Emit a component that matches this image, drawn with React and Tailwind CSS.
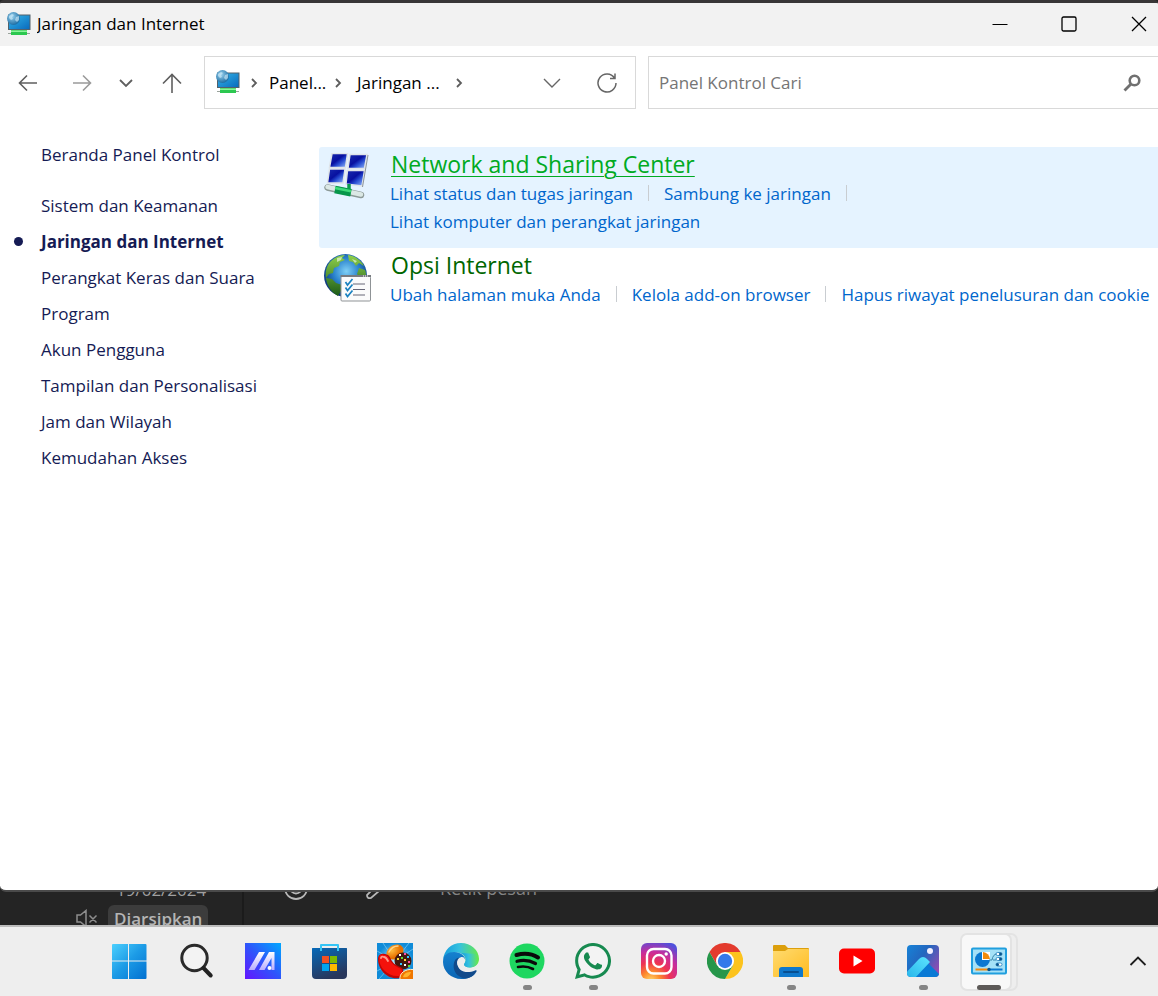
import React from "react";
import { FaWhatsapp } from "react-icons/fa";

const sideLinks = [
  "Sistem dan Keamanan",
  "Jaringan dan Internet",
  "Perangkat Keras dan Suara",
  "Program",
  "Akun Pengguna",
  "Tampilan dan Personalisasi",
  "Jam dan Wilayah",
  "Kemudahan Akses",
];

function NetworkIcon({ id }) {
  return (
    <svg viewBox="0 0 24 24" className="size-6 shrink-0" aria-hidden="true">
      <defs>
        <linearGradient id={id + "s"} x1="0" y1="0" x2="1" y2="1">
          <stop offset="0" stopColor="#35b6e8" />
          <stop offset="1" stopColor="#0869bd" />
        </linearGradient>
        <radialGradient id={id + "g"} cx=".4" cy=".35" r=".65">
          <stop offset="0" stopColor="#9ad2ee" />
          <stop offset="1" stopColor="#1f6fa5" />
        </radialGradient>
      </defs>
      <rect x="1.5" y="3" width="21.5" height="14.5" fill={"url(#" + id + "s)"} stroke="#52616b" />
      <path d="M1 21.5h22" stroke="#9aa39c" />
      <rect x="4" y="18" width="16" height="5" fill="#2cc850" />
      <path d="M4 19.3h16" stroke="#8df49a" strokeWidth="1.5" />
      <circle cx="6.500" cy="6.500" r="6.500" fill={"url(#" + id + "g)"} />
      <path d="M2 4l3-2 2 1-2 2 1 2-2 1-2-2zM9 5l3-1v4l-2 2-2-2z" fill="#d7f0fb" opacity=".6" />
    </svg>
  );
}

function SharingIcon() {
  return (
    <svg viewBox="0 0 46 46" className="size-[46px] shrink-0" aria-hidden="true">
      <defs>
        <linearGradient id="pane" x1="0" y1="0" x2="1" y2="1">
          <stop offset="0" stopColor="#1a2cae" />
          <stop offset=".45" stopColor="#0710a0" />
          <stop offset=".62" stopColor="#2549d0" />
          <stop offset="1" stopColor="#9fc6ff" />
        </linearGradient>
      </defs>
      <g stroke="#dfe4e8" strokeWidth="1.5" fill="url(#pane)">
        <path d="M8 .5h15.500l-2 14H5.500z" />
        <path d="M26 1.500h17l-2.500 14H24z" />
        <path d="M5.500 16h15.500l-2 14H3.500z" />
        <path d="M23.500 17.500h17l-2.500 15.500-16-2z" />
      </g>
      <path d="M44 2l-5.500 32" stroke="#8e9499" />
      <path d="M3.500 34.500L37 42" stroke="#8d9a98" strokeWidth="6.500" strokeLinecap="round" />
      <path d="M3.500 34L37 41.500" stroke="#dbe8e5" strokeWidth="4.500" strokeLinecap="round" />
      <path d="M11 36.500l16 3.200" stroke="#07964a" strokeWidth="7.500" />
      <path d="M11 35l16 3.200" stroke="#3fdb79" strokeWidth="2.500" />
      <path d="M25 31v5" stroke="#0a9c4c" strokeWidth="3.500" />
    </svg>
  );
}

function GlobeOptionsIcon() {
  return (
    <svg viewBox="0 0 48 48" className="size-12 shrink-0" aria-hidden="true">
      <defs>
        <radialGradient id="sea" cx=".52" cy=".4" r=".6">
          <stop offset="0" stopColor="#80d0f5" />
          <stop offset=".5" stopColor="#2a83cd" />
          <stop offset="1" stopColor="#082c72" />
        </radialGradient>
        <linearGradient id="land" x1="0" y1="0" x2="0" y2="1">
          <stop offset="0" stopColor="#8fd04a" />
          <stop offset="1" stopColor="#1b5a18" />
        </linearGradient>
      </defs>
      <circle cx="21.500" cy="21.500" r="21.500" fill="url(#sea)" />
      <path d="M7 7c4-4 9-6 14-6l-3 3 3 2-5 2-1 4-5 2-1 5-4 1-3 4c-1-7 1-13 5-17zM24 1c7 1 13 5 16 11l-5-3-3 3-3-4-4-1zM35 14l6 2c2 5 1 10-1 14l-4-6-3-4zM2 24l6 1 4 4 6 2-1 6-3 5C7 38 3 32 2 24z" fill="url(#land)" />
      <path d="M13 4l5-1-1 3-4 2zM28 5l5 2-2 2z" fill="#d8efc8" opacity=".8" />
      <rect x="17" y="22.500" width="29.500" height="24.500" rx="1" fill="#fbfbfb" stroke="#8f9396" />
      <path d="M16.500 22h30.500" stroke="#777b80" strokeWidth="2" />
      <path d="M39 22h6" stroke="#fff" strokeDasharray="1 1" />
      <path d="M29 30h12M29 35.500h12M29 41h12" stroke="#667" />
      <path d="M21.500 28l2 3 5-6M21.500 33.500l2 3 5-6M21.500 39.500l2 3 5-6" fill="none" stroke="#1b82c0" strokeWidth="1.700" />
    </svg>
  );
}

function Chevron() {
  return (
    <svg viewBox="0 0 10 10" className="size-[10px] shrink-0" fill="none" stroke="#5d5d5d" strokeWidth="1.800" aria-hidden="true">
      <path d="M3 1l4 4-4 4" />
    </svg>
  );
}

function Category({ icon, title, links, active }) {
  return (
    <section className={"flex pb-3 pl-[5px] " + (active ? "rounded-l-[3px] bg-[#e5f3ff]" : "")}>
      <div className="w-[66px] shrink-0 pt-1.5">{icon}</div>
      <div className="min-w-0 flex-1">
        <h2 className="pt-px pl-px text-[23px] leading-8">
          <a href="#open" className={active ? "text-[#00aa22] underline decoration-1 underline-offset-3" : "text-[#006600]"}>{title}</a>
        </h2>
        <ul className="flex flex-wrap text-[17px] leading-7 text-[#0066cc]">
          {links.map((l, i) => (
            <li key={l} className="flex items-center whitespace-nowrap">
              <a href="#task">{l}</a>
              {i < links.length - 1 && <span className="mx-[15px] mb-0.5 h-4 w-px bg-[#c9cdd1]" />}
            </li>
          ))}
        </ul>
      </div>
    </section>
  );
}

const Svg = ({ children }) => (
  <svg viewBox="0 0 36 36" className="size-9" aria-hidden="true">{children}</svg>
);

const apps = [
  { name: "Mulai", icon: (
    <Svg>
      <defs>
        <linearGradient id="win" gradientUnits="userSpaceOnUse" x1="0" y1="0" x2="36" y2="36">
          <stop offset="0" stopColor="#4fd3ff" /><stop offset=".5" stopColor="#1c9be6" /><stop offset="1" stopColor="#006fd0" />
        </linearGradient>
      </defs>
      <path fill="url(#win)" d="M2 1h15v16.500H1V2a1 1 0 0 1 1-1zM18 1h16.500a1 1 0 0 1 1 1v15.500H18zM1 18.500h16V36H2a1 1 0 0 1-1-1zM18 18.500h17.500V35a1 1 0 0 1-1 1H18z" />
    </Svg>
  ) },
  { name: "Cari", icon: (
    <Svg>
      <circle cx="15.500" cy="15" r="12.700" fill="#f3f3f3" stroke="#2a2a2a" strokeWidth="3" />
      <path d="M24.500 25l7.200 7.500" stroke="#222" strokeWidth="4" strokeLinecap="round" />
    </Svg>
  ) },
  { name: "MyASUS", icon: (
    <Svg>
      <defs>
        <linearGradient id="asus" x1="0" y1="1" x2="1" y2="0"><stop offset="0" stopColor="#6414ff" /><stop offset=".5" stopColor="#2e55fb" /><stop offset="1" stopColor="#00a8ff" /></linearGradient>
        <linearGradient id="asusm" x1="0" y1="1" x2="0" y2="0"><stop offset="0" stopColor="#b9adff" /><stop offset="1" stopColor="#fff" /></linearGradient>
      </defs>
      <path fill="url(#asus)" d="M0 0h36v36H0z" />
      <path fill="url(#asusm)" d="M14 9h6L9.500 27H3.500zM24 9h5.500v18h-3V15L19.500 27h-5.500z" />
      <circle cx="24.500" cy="25" r="2" fill="#fff" />
    </Svg>
  ) },
  { name: "Microsoft Store", icon: (
    <Svg>
      <defs>
        <linearGradient id="store" x1="0" y1="0" x2=".4" y2="1"><stop offset="0" stopColor="#0669b8" /><stop offset="1" stopColor="#28375c" /></linearGradient>
      </defs>
      <path fill="url(#store)" d="M1.500 5h34a.5.5 0 0 1 .5.5V32a4 4 0 0 1-4 4H5a4 4 0 0 1-4-4V5.500a.5.5 0 0 1 .5-.5z" />
      <path d="M10 8V2h17v6" fill="none" stroke="#35c5f6" strokeWidth="2" strokeLinejoin="round" />
      <path fill="#f25022" d="M11 13h7v7h-7z" /><path fill="#7fba00" d="M19 13h7v7h-7z" />
      <path fill="#00a4ef" d="M11 21h7v7h-7z" /><path fill="#ffb900" d="M19 21h7v7h-7z" />
    </Svg>
  ) },
  { name: "Candy Crush", icon: (
    <Svg>
      <defs>
        <radialGradient id="sky"><stop offset="0" stopColor="#b7ecff" /><stop offset="1" stopColor="#0f8bd8" /></radialGradient>
        <radialGradient id="orange" cx=".4" cy=".3"><stop offset="0" stopColor="#ffb93d" /><stop offset="1" stopColor="#e77000" /></radialGradient>
      </defs>
      <path fill="url(#sky)" d="M0 0h36v36H0z" />
      <path d="M18 18L0 8M18 18L6 0M18 18L32 0M18 18L36 6M18 18L2 36M18 18L0 28" stroke="#a9e6ff" opacity=".5" />
      <ellipse cx="18" cy="9" rx="9" ry="7" transform="rotate(-32 18 9)" fill="url(#orange)" />
      <path d="M12 9c2-4 5-6 9-6" fill="none" stroke="#ffd489" strokeWidth="1.500" strokeLinecap="round" />
      <circle cx="26" cy="18" r="8.500" fill="#43180f" />
      <path fill="#fff" d="M22 11h2v2h-2zM27 21h2v2h-2z" />
      <path fill="#ff4fa0" d="M27 10h2v2h-2zM31 18h2v2h-2z" />
      <path fill="#32c4ff" d="M30 13h2v2h-2zM23 20h2v2h-2z" />
      <path fill="#ffd92f" d="M20 15h2v2h-2zM27 16h2v2h-2z" />
      <path fill="#5bd838" d="M24 14h2v2h-2zM31 22h2v2h-2z" />
      <path fill="#c00505" d="M1 16c0-5 4-6 7-5 5 1 5 4 7 7 2 4 7 5 10 7 3 3 1 9-3 10C11 37 1 27 1 16z" />
      <path fill="#f4120c" d="M2 15c0-4 4-4 6-3 4 1 4 4 6 7 3 4 7 5 10 7 2 2 1 6-2 7C11 34 2 25 2 15z" />
      <path d="M4 15c0-1 1-2 3-1 2 0 3 2 4 4" fill="none" stroke="#ff9b8b" strokeWidth="1.800" strokeLinecap="round" />
      <path d="M23 36.500c-1-6 5-11 13.500-10v10z" fill="#f07700" stroke="#fff3d4" />
      <path d="M26 34c1-4 4-5 8-5-1 4-4 6-8 5z" fill="#ffb32b" />
    </Svg>
  ) },
  { name: "Microsoft Edge", icon: (
    <Svg>
      <defs>
        <linearGradient id="e1" x1="0" y1=".5" x2="1" y2=".5"><stop offset="0" stopColor="#159bdc" /><stop offset=".45" stopColor="#35c1df" /><stop offset="1" stopColor="#66e94a" /></linearGradient>
        <linearGradient id="e2" x1="0" y1="0" x2="0" y2="1"><stop offset="0" stopColor="#1581cf" /><stop offset="1" stopColor="#0b65b4" /></linearGradient>
      </defs>
      <path fill="url(#e1)" d="M0 17C1 7 8 0 18 0c10 0 18 7 18 16 0 5-4 8.500-9 8.500-4 0-6-1.500-6-3 0-1 1.500-2 1.500-4.500C22.500 13 19 10 14 9.500 7 9 2 12 0 17z" />
      <path fill="url(#e2)" d="M0 19C0 12 5 9 11 9c7 0 11 4 11.500 8-5-3.500-9 0-9 5 0 6 5 10 11 10 4 0 6-.8 8-2-3 4-8 6-14 6C8 36 0 28 0 19z" />
      <path fill="#114a8b" d="M13 16c-4 4-4 17 9 19.500 5 0 9-3 11.500-7 .5-1-.5-1.500-1.500-1-9 4-18 0-17-7 0-3 2-5 4-5-2-1-4.500-.8-6 .5z" />
      <path fill="#ededed" d="M14 20c0-4 3-6 5-6 2 0 3 1.500 3 3.500 0 2-1.500 3-1.500 4 0 2 3 3.500 7 3.500 3 0 6-1.500 8-4-1 4-4 7-9 7-7 0-12.500-3-12.500-8z" />
      <path fill="url(#e1)" d="M22 19.500C24 17 23 12 18 10l16 1c3 6 1 13-7 13.500-4 0-6-1.500-6-3z" />
    </Svg>
  ) },
  { name: "Spotify", running: true, icon: (
    <Svg>
      <circle cx="18" cy="18" r="17.500" fill="#1ed760" />
      <g fill="none" stroke="#0a0a0a" strokeLinecap="round">
        <path d="M7.500 12c7-1.800 15-1.500 21.500 2.500" strokeWidth="4" /><path d="M8 18.300c7-1.800 13-.8 18.500 2.200" strokeWidth="3.200" /><path d="M9 24c6-1.300 10.500-.5 15 2" strokeWidth="2.600" />
      </g>
    </Svg>
  ) },
  { name: "WhatsApp", running: true, icon: (
    <Svg>
      <path d="M3 33l2-8A16 16 0 1 1 12 31.500z" fill="#f3f3f3" />
      <FaWhatsapp x="-2.600" y="-2.600" size={41.2} color="#178a50" />
    </Svg>
  ) },
  { name: "Instagram", icon: (
    <Svg>
      <defs>
        <radialGradient id="ig" cx=".28" cy="1.050" r="1.150"><stop offset="0" stopColor="#ffd96b" /><stop offset=".22" stopColor="#fd8b2c" /><stop offset=".45" stopColor="#ee3352" /><stop offset=".7" stopColor="#c92c9b" /><stop offset="1" stopColor="#4f50dc" /></radialGradient>
      </defs>
      <rect width="36" height="36" rx="6" fill="url(#ig)" />
      <g fill="none" stroke="#fff" strokeWidth="2.400"><rect x="6" y="6" width="24.500" height="24.500" rx="6.500" /><circle cx="18" cy="18" r="6" /></g>
      <circle cx="25.200" cy="11" r="1.700" fill="#fff" />
    </Svg>
  ) },
  { name: "Google Chrome", icon: (
    <Svg>
      <path fill="#e33b2e" d="M2.400 9A18 18 0 0 1 33.600 9H18L10.200 22.500z" />
      <path fill="#fcc31e" d="M33.600 9A18 18 0 0 1 18 36l7.800-13.500L18 9z" />
      <path fill="#26964a" d="M18 36A18 18 0 0 1 2.400 9l7.800 13.500h15.600z" />
      <circle cx="18" cy="18" r="9" fill="#fff" /><circle cx="18" cy="18" r="7.200" fill="#3479ea" />
    </Svg>
  ) },
  { name: "File Explorer", running: true, icon: (
    <Svg>
      <defs><linearGradient id="folder" x1="0" y1="0" x2="1" y2="1"><stop offset="0" stopColor="#ffdb70" /><stop offset="1" stopColor="#ffbb20" /></linearGradient></defs>
      <path fill="#dc9f0c" d="M1 2h11l3 3h20a1 1 0 0 1 1 1v5H0V3a1 1 0 0 1 1-1z" />
      <path fill="url(#folder)" d="M0 8h12l3-2h20a1 1 0 0 1 1 1v27H1a1 1 0 0 1-1-1z" />
      <path fill="#0f78cc" d="M6 34v-7a3 3 0 0 1 3-3h18a3 3 0 0 1 3 3v7z" />
      <path d="M11 29h14" stroke="#084f91" strokeWidth="2" strokeLinecap="round" />
    </Svg>
  ) },
  { name: "YouTube", icon: (
    <Svg>
      <rect y="5.500" width="36" height="25" rx="5" fill="#f00" /><path fill="#fff" d="M14.500 12.500l9 5.500-9 5.500z" />
    </Svg>
  ) },
  { name: "Foto", running: true, icon: (
    <Svg>
      <defs>
        <linearGradient id="photo" x1="0" y1="0" x2="1" y2=".7"><stop offset="0" stopColor="#1587db" /><stop offset=".5" stopColor="#2366be" /><stop offset="1" stopColor="#9a4ab1" /></linearGradient>
        <linearGradient id="hill" x1="0" y1="1" x2="1" y2="0"><stop offset="0" stopColor="#25b2e9" /><stop offset="1" stopColor="#5be5ff" /></linearGradient>
        <clipPath id="pclip"><rect x="2" y="2" width="32" height="32" rx="4" /></clipPath>
      </defs>
      <g clipPath="url(#pclip)">
        <path fill="url(#photo)" d="M0 0h36v36H0z" />
        <path fill="#0a7ad5" d="M17 14l19 19v3H5z" />
        <path fill="url(#hill)" d="M0 31l14-15q4-4 8 0l3 3L9 36H0z" />
        <circle cx="25" cy="8" r="3" fill="#f2efff" />
      </g>
    </Svg>
  ) },
  { name: "Panel Kontrol", active: true, icon: (
    <Svg>
      <rect x="1" y="5.500" width="34" height="25" rx="1" fill="#a5e1f7" stroke="#219fde" strokeWidth="2" />
      <circle cx="11.500" cy="16.500" r="7.500" fill="#0b78d0" />
      <path fill="#fff" d="M11 9V17h8v-8z" /><path fill="#f28b0c" d="M12 9a7.500 7.500 0 0 1 7 7h-7z" />
      <path d="M18 17h3q1-6 5-6M22 17h3" fill="none" stroke="#3a86aa" />
      <g fill="#fff" stroke="#1979bb" strokeWidth=".8"><rect x="25" y="9.500" width="6" height="3" rx="1.500" /><rect x="25" y="14.500" width="6" height="3" rx="1.500" /><rect x="25" y="20" width="6" height="3" rx="1.500" /></g>
      <circle cx="29.500" cy="11" r="1.500" fill="#07558e" /><circle cx="29.500" cy="16" r="1.500" fill="#07558e" /><circle cx="26.500" cy="21.500" r="1.500" fill="#07558e" />
      <path d="M4.500 26.500H17" stroke="#f28b0c" strokeWidth="2" /><path d="M18 26.500h13.500" stroke="#0b78d0" strokeWidth="2" /><circle cx="18" cy="26.500" r="1.700" fill="#07558e" />
    </Svg>
  ) },
];

export default function App() {
  return (
    <div className="flex h-screen flex-col overflow-hidden bg-[#242424] font-['Segoe_UI','Open_Sans',sans-serif] text-[17px] text-black">
      <div className="flex min-h-0 flex-1 flex-col overflow-hidden rounded-t-[4px] rounded-b-[6px] border-t-3 border-b-2 border-t-[#383637] border-b-[#4a4a4a] bg-white">
        <header className="flex h-[43px] shrink-0 items-stretch bg-[#f2f2f2] pb-0.5 pl-[7px]">
          <div className="flex min-w-0 flex-1 items-center gap-1.5">
            <NetworkIcon id="title" />
            <h1 className="truncate">Jaringan dan Internet</h1>
          </div>
          <button aria-label="Minimalkan" className="flex w-[69px] items-center justify-center">
            <svg viewBox="0 0 16 16" className="size-4" stroke="#000"><path d="M.5 8.500h15" /></svg>
          </button>
          <button aria-label="Maksimalkan" className="flex w-[69px] items-center justify-center">
            <svg viewBox="0 0 16 16" className="size-4" fill="none" stroke="#000" strokeWidth="1.300"><rect x="1" y="1" width="14" height="14" rx="1.500" /></svg>
          </button>
          <button aria-label="Tutup" className="flex w-[55px] items-center pl-7">
            <svg viewBox="0 0 16 16" className="size-4" stroke="#000" strokeWidth="1.300"><path d="M1 1l14 14M15 1L1 15" /></svg>
          </button>
        </header>

        <nav aria-label="Navigasi" className="flex h-[73px] shrink-0 items-center">
          <button aria-label="Kembali" className="flex w-14 justify-center">
            <svg viewBox="0 0 20 20" className="size-5" fill="none" stroke="#5f5f5f" strokeWidth="1.600"><path d="M19 10H2M9 2.500L1.500 10 9 17.500" /></svg>
          </button>
          <button aria-label="Maju" className="flex w-[52px] justify-center">
            <svg viewBox="0 0 20 20" className="size-5" fill="none" stroke="#9b9b9b" strokeWidth="1.600"><path d="M1 10h17M11 2.500l7.500 7.500-7.500 7.500" /></svg>
          </button>
          <button aria-label="Lokasi terbaru" className="flex w-9 justify-center">
            <svg viewBox="0 0 14 14" className="size-3.5" fill="none" stroke="#5f5f5f" strokeWidth="1.800"><path d="M1 4l6 6 6-6" /></svg>
          </button>
          <button aria-label="Naik" className="flex w-14 justify-center">
            <svg viewBox="0 0 20 20" className="size-5" fill="none" stroke="#5f5f5f" strokeWidth="1.600"><path d="M10 20V2M1 10.500l9-9 9 9" /></svg>
          </button>
          <div className="ml-1 flex h-[53px] w-[432px] items-center border border-[#d9d9d9] pl-[11px]">
            <span className="pb-0.5"><NetworkIcon id="addr" /></span>
            <span className="w-[9px]" />
            <Chevron />
            <a href="#panel" className="w-[74px] pl-[10px] whitespace-nowrap">Panel...</a>
            <Chevron />
            <a href="#jaringan" className="w-[111px] pl-[14px] whitespace-nowrap">Jaringan ...</a>
            <Chevron />
            <span className="flex-1" />
            <button aria-label="Riwayat alamat" className="flex w-[55px] justify-center">
              <svg viewBox="0 0 18 18" className="size-[18px]" fill="none" stroke="#666" strokeWidth="1.400"><path d="M1 5l8 8 8-8" /></svg>
            </button>
            <button aria-label="Segarkan" className="flex w-14 justify-center">
              <svg viewBox="0 0 20 20" className="size-5" fill="none" stroke="#666" strokeWidth="1.500"><path d="M17.500 5A9 9 0 1 0 19 10M18 .5V5.500H13" /></svg>
            </button>
          </div>
          <label className="ml-3 flex h-[53px] min-w-0 flex-1 items-center border border-r-0 border-[#d9d9d9] pr-[17px] pl-[10px]">
            <input type="text" aria-label="Panel Kontrol Cari" placeholder="Panel Kontrol Cari" className="min-w-0 flex-1 outline-none placeholder:text-[#757575]" />
            <svg viewBox="0 0 18 18" className="size-[18px]" fill="none" stroke="#707070" aria-hidden="true"><circle cx="11.500" cy="6.500" r="4.800" strokeWidth="2.600" /><path d="M8 10l-6.500 6.500" strokeWidth="2.800" /></svg>
          </label>
        </nav>

        <div className="flex min-h-0 flex-1">
          <aside className="w-[319px] shrink-0 pt-[18px] leading-9 text-[#151b54]">
            <a href="#beranda" className="ml-[41px] block">Beranda Panel Kontrol</a>
            <ul className="mt-[15px]">
              {sideLinks.map((s, i) => (
                <li key={s} className="flex items-center">
                  <span className="flex w-[41px] pb-0.5 pl-3.5">{i === 1 && <span className="size-[9px] rounded-full bg-[#151b54]" />}</span>
                  <a href="#kategori" aria-current={i === 1 ? "page" : undefined} className={i === 1 ? "font-bold" : ""}>{s}</a>
                </li>
              ))}
            </ul>
          </aside>
          <main className="min-w-0 flex-1 pt-7">
            <Category active icon={<SharingIcon />} title="Network and Sharing Center" links={["Lihat status dan tugas jaringan", "Sambung ke jaringan", "Lihat komputer dan perangkat jaringan"]} />
            <Category icon={<GlobeOptionsIcon />} title="Opsi Internet" links={["Ubah halaman muka Anda", "Kelola add-on browser", "Hapus riwayat penelusuran dan cookie"]} />
          </main>
        </div>
      </div>

      <div className="flex h-[33px] shrink-0 overflow-hidden text-[#a0a0a0]">
        <div className="w-[244px] shrink-0 border-r-2 border-[#1b1b1b] pl-[76px]">
          <p className="-mt-3.5 pl-10 leading-6">19/02/2024</p>
          <div className="mt-[3px] flex items-start gap-2.5">
            <svg viewBox="0 0 22 20" className="mt-1 h-5 w-[22px]" fill="none" stroke="#8d8d8d" strokeWidth="1.500" aria-hidden="true"><path d="M1 6h3.500L10 1.500v16L4.500 13H1zM13.500 6.500l7 7M20.500 6.500l-7 7" /></svg>
            <span className="rounded-md bg-[#3c3c3c] px-1.5 leading-7 font-semibold text-[#b5b5b5]">Diarsipkan</span>
          </div>
        </div>
        <svg viewBox="0 0 24 24" className="-mt-4 ml-10 size-6" fill="none" stroke="#b8b8b8" strokeWidth="1.800" aria-hidden="true"><circle cx="12" cy="12" r="11" /><path d="M6 14q6 7 12 0" /></svg>
        <svg viewBox="0 0 24 24" className="-mt-4 ml-[54px] size-6" fill="none" stroke="#b8b8b8" strokeWidth="1.800" strokeLinecap="round" aria-hidden="true"><path d="M17 15l-8 7q-4 1-4-3L19 5" /></svg>
        <p className="-mt-4 ml-[54px] text-[18px] leading-6 text-[#858585]">Ketik pesan</p>
      </div>

      <footer className="flex h-[71px] shrink-0 items-stretch border-t-2 border-[#bcbcbc] bg-[#eeeeee] pl-24">
        {apps.map((a) => (
          <button key={a.name} aria-label={a.name} className="relative flex w-[66px] items-center justify-center pb-0.5 first:mr-0.5">
            {a.active && <span className="absolute top-1.5 left-2.5 h-[58px] w-[52px] rounded-[7px] border-2 border-[#e3e3e3] bg-[#eeeeee]" />}
            {a.active && <span className="absolute top-1.5 left-1 h-[58px] w-[52px] rounded-[7px] border-2 border-[#e3e3e3] bg-[#f8f8f8]" />}
            <span className="relative">{a.icon}</span>
            {(a.running || a.active) && <span className={"absolute bottom-1.5 h-[5px] rounded-full " + (a.active ? "w-6 bg-[#5d5a58]" : "w-[9px] bg-[#858585]")} />}
          </button>
        ))}
        <span className="flex-1" />
        <button aria-label="Tampilkan ikon tersembunyi" className="flex w-10 items-center justify-center pb-0.5">
          <svg viewBox="0 0 18 18" className="size-[18px]" fill="none" stroke="#1e1e1e" strokeWidth="1.800"><path d="M1.500 13L9 5.500l7.500 7.500" /></svg>
        </button>
      </footer>
    </div>
  );
}
